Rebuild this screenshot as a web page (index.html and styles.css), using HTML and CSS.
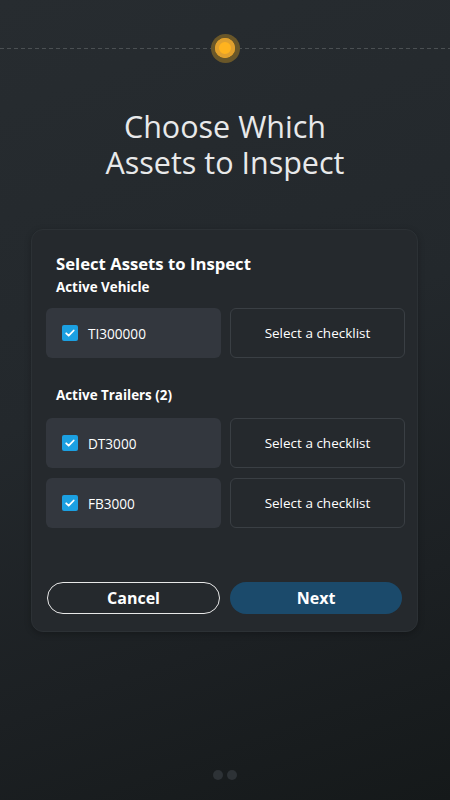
FILE: index.html
```html
<!DOCTYPE html>
<html lang="en">
<head>
<meta charset="utf-8">
<title>Choose Which Assets to Inspect</title>
<link rel="stylesheet" href="styles.css">
</head>
<body>
<div class="screen">
  <div class="stepper">
    <div class="step-dot"><span class="step-core"></span></div>
  </div>
  <h1 class="title">Choose Which<br>Assets to Inspect</h1>
  <section class="card">
    <h2 class="card-title">Select Assets to Inspect</h2>
    <h3 class="group-title">Active Vehicle</h3>
    <div class="row">
      <label class="asset"><span class="check"><svg viewBox="0 0 16 16" width="16" height="16"><path d="M4.2 8.3l2.5 2.4 5-5.2" fill="none" stroke="#fff" stroke-width="1.8" stroke-linecap="round" stroke-linejoin="round"/></svg></span>TI300000</label>
      <button class="checklist">Select a checklist</button>
    </div>
    <h3 class="group-title trailers">Active Trailers (2)</h3>
    <div class="row">
      <label class="asset"><span class="check"><svg viewBox="0 0 16 16" width="16" height="16"><path d="M4.2 8.3l2.5 2.4 5-5.2" fill="none" stroke="#fff" stroke-width="1.8" stroke-linecap="round" stroke-linejoin="round"/></svg></span>DT3000</label>
      <button class="checklist">Select a checklist</button>
    </div>
    <div class="row">
      <label class="asset"><span class="check"><svg viewBox="0 0 16 16" width="16" height="16"><path d="M4.2 8.3l2.5 2.4 5-5.2" fill="none" stroke="#fff" stroke-width="1.8" stroke-linecap="round" stroke-linejoin="round"/></svg></span>FB3000</label>
      <button class="checklist">Select a checklist</button>
    </div>
    <div class="actions">
      <button class="btn btn-cancel">Cancel</button>
      <button class="btn btn-next">Next</button>
    </div>
  </section>
  <div class="pager"><span class="pager-dot"></span><span class="pager-dot"></span></div>
</div>
</body>
</html>
```
FILE: styles.css
```css
* { box-sizing: border-box; }
html, body { margin: 0; padding: 0; }
body {
  width: 450px;
  height: 800px;
  overflow: hidden;
  font-family: "Open Sans", "Noto Sans", sans-serif;
  color: #fff;
  background: linear-gradient(160deg, #272c30 0%, #23282c 45%, #1c2023 75%, #15191a 100%);
}
.screen {
  display: flex;
  flex-direction: column;
  padding-top: 33px;
  height: 800px;
}
.stepper {
  height: 30px;
  display: flex;
  align-items: center;
  justify-content: center;
  background-image: linear-gradient(to right, #4b5053 0 4px, transparent 4px 7px);
  background-size: 7px 1px;
  background-repeat: repeat-x;
  background-position: 0 15px;
}
.step-dot {
  width: 29px;
  height: 29px;
  border-radius: 50%;
  background: #6a5729;
  display: flex;
  align-items: center;
  justify-content: center;
}
.step-core {
  width: 20px;
  height: 20px;
  border-radius: 50%;
  background: #ffb31f;
  box-shadow: inset 0 0 0 4px #e0a02e;
}
.title {
  margin: 45px 0 0;
  font-size: 30.5px;
  line-height: 36px;
  font-weight: 400;
  text-align: center;
  color: #e8e9ea;
}
.card {
  margin: 49px 32px 0 31px;
  padding: 23px 14px 17px;
  border: 1px solid #2c3135;
  border-radius: 12px;
  background: #25292d;
  box-shadow: 0 2px 6px rgba(0,0,0,0.25);
}
.card-title {
  margin: 0 0 0 10px;
  font-size: 16.7px;
  line-height: 22px;
  font-weight: 700;
}
.group-title {
  margin: 3px 0 12px 10px;
  font-size: 13.4px;
  line-height: 18px;
  font-weight: 700;
}
.group-title.trailers {
  margin: 28px 0 14px 10px;
}
.row {
  display: grid;
  grid-template-columns: 175px 175px;
  gap: 9px;
  height: 50px;
  margin-bottom: 10px;
}
.asset {
  display: flex;
  align-items: center;
  gap: 10px;
  padding-left: 16px;
  border-radius: 6px;
  background: #33373e;
  font-size: 13.6px;
  color: #fff;
}
.check {
  width: 16px;
  height: 16px;
  border-radius: 2px;
  background: #1ba0e2;
  display: flex;
}
.checklist {
  border: 1px solid #3a3f44;
  border-radius: 6px;
  background: transparent;
  color: #fff;
  font-family: inherit;
  font-size: 13.5px;
  padding: 0;
}
.actions {
  display: grid;
  grid-template-columns: 173px 172px;
  gap: 10px;
  margin: 54px 0 0 1px;
}
.btn {
  height: 32px;
  border-radius: 16px;
  font-family: inherit;
  font-size: 16px;
  font-weight: 700;
  color: #fff;
  padding: 0;
}
.btn-cancel {
  background: transparent;
  border: 1.5px solid #e8e8e8;
}
.btn-next {
  background: #1b4a6b;
  border: none;
}
.pager {
  display: flex;
  justify-content: center;
  gap: 4px;
  margin-top: 138px;
}
.pager-dot {
  width: 10px;
  height: 10px;
  border-radius: 50%;
  background: #2d3236;
}
```
